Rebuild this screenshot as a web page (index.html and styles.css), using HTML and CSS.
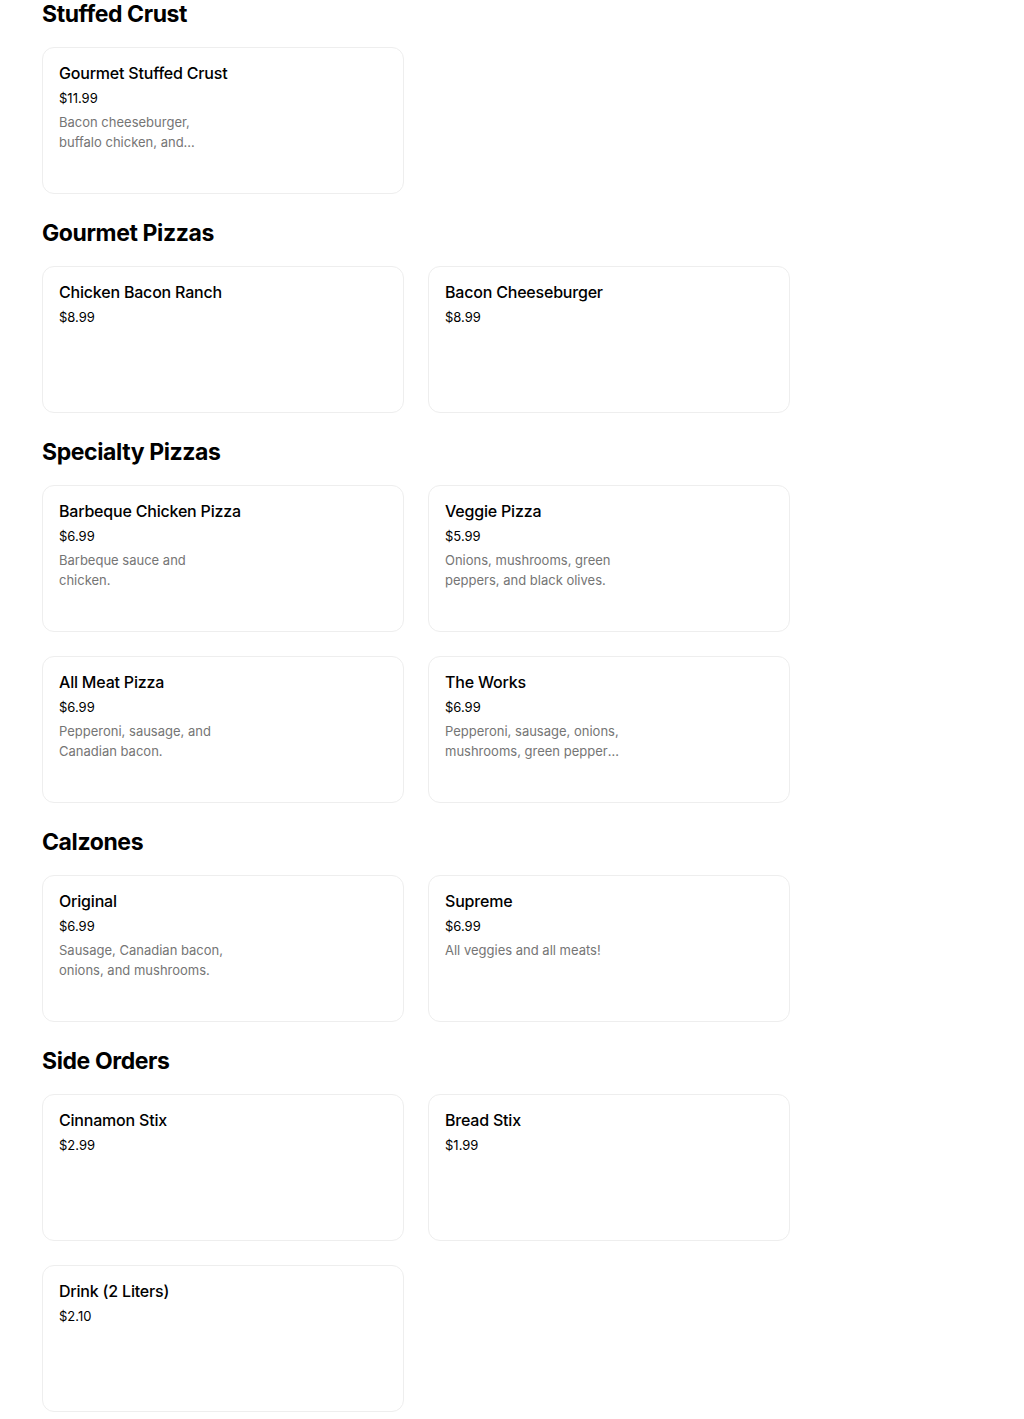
FILE: index.html
```html
<!DOCTYPE html>
<html lang="en">
<head>
    <meta charset="UTF-8">
    <meta name="viewport" content="width=device-width, initial-scale=1.0">
    <title>Menu</title>
    <link rel="stylesheet" href="styles.css">
</head>
<body>
    <main class="menu">
        <section class="category">
            <h2>Stuffed Crust</h2>
            <div class="items">
                <div class="item">
                    <div class="item-name">Gourmet Stuffed Crust</div>
                    <div class="item-price">$11.99</div>
                    <div class="item-desc">Bacon cheeseburger, buffalo chicken, and chicken bacon ranch stuffed crust pizzas.</div>
                </div>
            </div>
        </section>

        <section class="category">
            <h2>Gourmet Pizzas</h2>
            <div class="items">
                <div class="item">
                    <div class="item-name">Chicken Bacon Ranch</div>
                    <div class="item-price">$8.99</div>
                </div>
                <div class="item">
                    <div class="item-name">Bacon Cheeseburger</div>
                    <div class="item-price">$8.99</div>
                </div>
            </div>
        </section>

        <section class="category">
            <h2>Specialty Pizzas</h2>
            <div class="items">
                <div class="item">
                    <div class="item-name">Barbeque Chicken Pizza</div>
                    <div class="item-price">$6.99</div>
                    <div class="item-desc">Barbeque sauce and chicken.</div>
                </div>
                <div class="item">
                    <div class="item-name">Veggie Pizza</div>
                    <div class="item-price">$5.99</div>
                    <div class="item-desc">Onions, mushrooms, green peppers, and black olives.</div>
                </div>
                <div class="item">
                    <div class="item-name">All Meat Pizza</div>
                    <div class="item-price">$6.99</div>
                    <div class="item-desc">Pepperoni, sausage, and Canadian bacon.</div>
                </div>
                <div class="item">
                    <div class="item-name">The Works</div>
                    <div class="item-price">$6.99</div>
                    <div class="item-desc">Pepperoni, sausage, onions, mushrooms, green peppers, and black olives.</div>
                </div>
            </div>
        </section>

        <section class="category">
            <h2>Calzones</h2>
            <div class="items">
                <div class="item">
                    <div class="item-name">Original</div>
                    <div class="item-price">$6.99</div>
                    <div class="item-desc">Sausage, Canadian bacon, onions, and mushrooms.</div>
                </div>
                <div class="item">
                    <div class="item-name">Supreme</div>
                    <div class="item-price">$6.99</div>
                    <div class="item-desc">All veggies and all meats!</div>
                </div>
            </div>
        </section>

        <section class="category">
            <h2>Side Orders</h2>
            <div class="items">
                <div class="item">
                    <div class="item-name">Cinnamon Stix</div>
                    <div class="item-price">$2.99</div>
                </div>
                <div class="item">
                    <div class="item-name">Bread Stix</div>
                    <div class="item-price">$1.99</div>
                </div>
                <div class="item">
                    <div class="item-name">Drink (2 Liters)</div>
                    <div class="item-price">$2.10</div>
                </div>
            </div>
        </section>
    </main>
</body>
</html>
```

FILE: styles.css
```css
body {
    margin: 0;
    font-family: Inter, "Noto Sans", sans-serif;
    color: #000;
    background: #fff;
}
.menu {
    width: 748px;
    margin: -2px 0 0 42px;
}
.category {
    margin-bottom: 23px;
}
.category h2 {
    margin: 0 0 17px;
    font-size: 23px;
    line-height: 32px;
    font-weight: 700;
    letter-spacing: -0.4px;
}
.items {
    display: grid;
    grid-template-columns: 362px 362px;
    gap: 24px;
}
.item {
    height: 147px;
    box-sizing: border-box;
    border: 1px solid #eeeeee;
    border-radius: 12px;
    padding: 15px 16px 16px;
}
.item-name {
    font-size: 16px;
    line-height: 20px;
    font-weight: 500;
    letter-spacing: -0.2px;
}
.item-price {
    margin-top: 5px;
    font-size: 13px;
    line-height: 20px;
}
.item-desc {
    margin-top: 4px;
    width: 175px;
    font-size: 13px;
    line-height: 20px;
    color: #757575;
    display: -webkit-box;
    -webkit-line-clamp: 2;
    -webkit-box-orient: vertical;
    overflow: hidden;
}
```
